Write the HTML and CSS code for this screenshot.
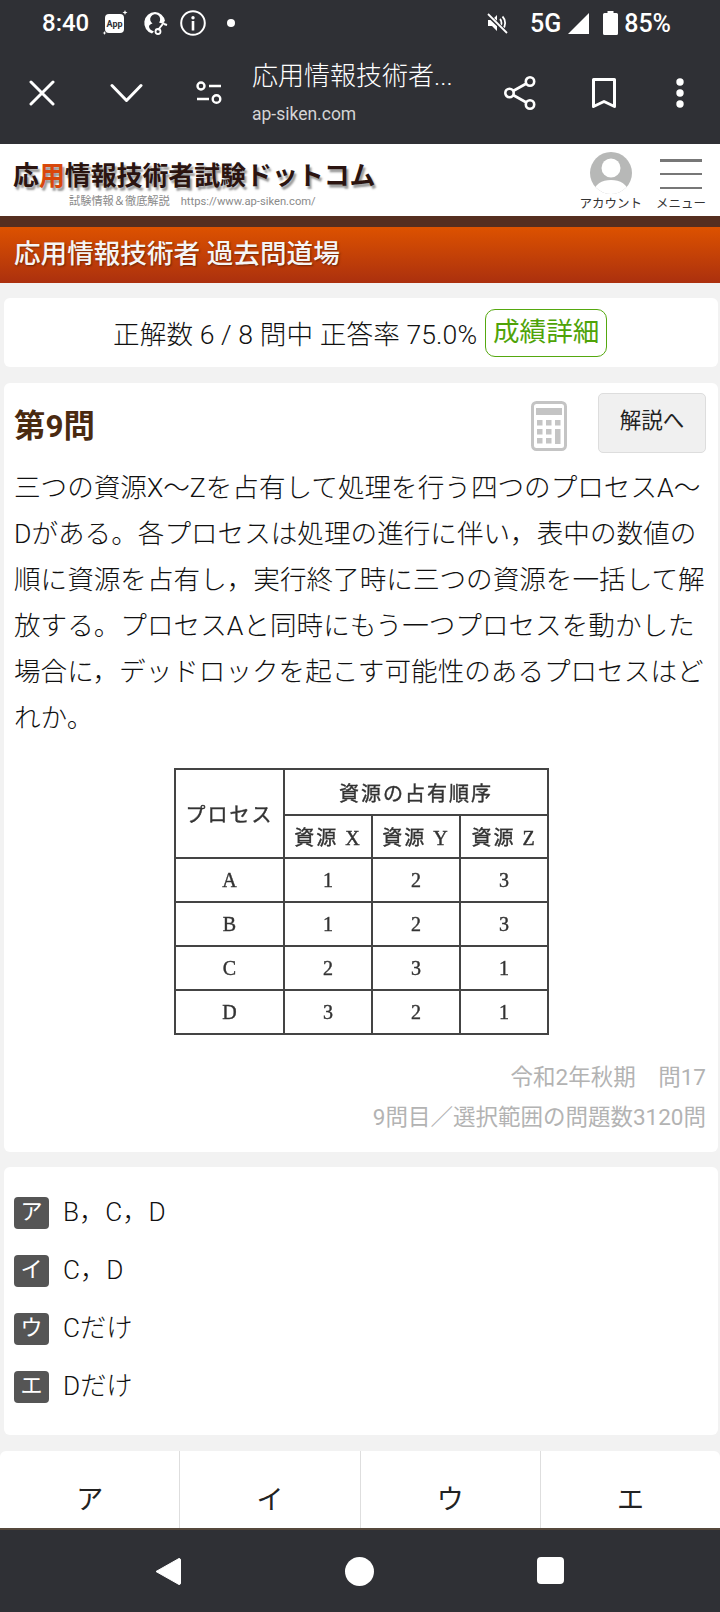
FILE: index.html
```html
<!DOCTYPE html>
<html lang="ja">
<head>
<meta charset="utf-8">
<title>応用情報技術者 過去問道場</title>
<link rel="stylesheet" href="styles.css">
</head>
<body>
<div class="phone">
  <div class="chrome">
    <div class="status">
      <span class="time">8:40</span>
      <svg class="st-app" width="26" height="26" viewBox="0 0 26 26"><rect x="3" y="4" width="19" height="19" rx="4" fill="#fff"/><text x="12.5" y="17" class="app-label">App</text><path d="M23 0l.7 1.8 1.8.7-1.8.7L23 5l-.7-1.8-1.8-.7 1.8-.7zM2.500 21l.6 1.400 1.400.6-1.400.6-.6 1.400-.6-1.400-1.400-.6 1.400-.6z" fill="#fff"/></svg>
      <svg class="st-person" width="26" height="26" viewBox="0 0 26 26"><path d="M12 2a11 11 0 0 0-3 21.500l2-2c-3-1-5-3-5-5 0-1.500 1.500-2.500 3.500-3a5 5 0 1 1 6.500-1c1 .2 2 .5 3 1l3-2.500A11 11 0 0 0 12 2z" fill="#fff"/><path d="M15 20l6-7.500" stroke="#fff" stroke-width="2" fill="none"/><circle cx="15" cy="21.500" r="2.500" stroke="#fff" stroke-width="1.800" fill="none"/><path d="M21 14l3 1" stroke="#fff" stroke-width="2"/></svg>
      <svg class="st-info" width="26" height="26" viewBox="0 0 26 26"><circle cx="13" cy="13" r="11.800" stroke="#fff" stroke-width="2" fill="none"/><circle cx="13" cy="7.800" r="1.700" fill="#fff"/><rect x="11.700" y="11" width="2.600" height="9.500" fill="#fff"/></svg>
      <span class="st-dot"></span>
      <span class="st-spacer"></span>
      <svg class="st-mute" width="22" height="22" viewBox="0 0 22 22"><path d="M2 8v6h4l5 5V3L6 8z" fill="#fff"/><path d="M14 7c2 2 2 6 0 8M16.500 4.500c3.500 3.500 3.500 9.500 0 13" stroke="#fff" stroke-width="1.800" fill="none"/><path d="M1 2l20 19" stroke="#2f3035" stroke-width="4"/><path d="M2 2l19 19" stroke="#fff" stroke-width="1.800"/></svg>
      <span class="net">5G</span>
      <svg class="st-signal" width="23" height="23" viewBox="0 0 23 23"><path d="M22 1v21H1z" fill="#fff"/></svg>
      <svg class="st-battery" width="15" height="24" viewBox="0 0 15 24"><path d="M4.500 0h6v2h3a1.500 1.500 0 0 1 1.500 1.500V22.500A1.500 1.500 0 0 1 13.500 24h-12A1.500 1.500 0 0 1 0 22.500V3.500A1.500 1.500 0 0 1 1.500 2h3z" fill="#fff"/></svg>
      <span class="batt">85%</span>
    </div>
    <div class="toolbar">
      <svg class="tb-close" width="26" height="26" viewBox="0 0 26 26"><path d="M2 2l22 22M24 2L2 24" stroke="#fff" stroke-width="3" stroke-linecap="round"/></svg>
      <svg class="tb-down" width="33" height="20" viewBox="0 0 33 20"><path d="M2 2.500l14.500 15 14.500-15" stroke="#fff" stroke-width="3" fill="none" stroke-linecap="round" stroke-linejoin="round"/></svg>
      <svg class="tb-tune" width="28" height="24" viewBox="0 0 28 24"><circle cx="6" cy="5" r="3.500" stroke="#fff" stroke-width="2.400" fill="none"/><path d="M14 5h12M2 18h12" stroke="#fff" stroke-width="2.600"/><circle cx="21.500" cy="18" r="3.800" stroke="#fff" stroke-width="2.400" fill="none"/></svg>
      <div class="tb-title">
        <div class="tb-main">応用情報技術者...</div>
        <div class="tb-sub">ap-siken.com</div>
      </div>
      <svg class="tb-share" width="34" height="36" viewBox="0 0 34 36"><path d="M6.500 18L27 6.500M6.500 18L27 29.500" stroke="#fff" stroke-width="2.600"/><circle cx="6.500" cy="18" r="4.200" fill="#2f3035" stroke="#fff" stroke-width="2.600"/><circle cx="27" cy="6.500" r="4.200" fill="#2f3035" stroke="#fff" stroke-width="2.600"/><circle cx="27" cy="29.500" r="4.200" fill="#2f3035" stroke="#fff" stroke-width="2.600"/></svg>
      <svg class="tb-mark" width="26" height="32" viewBox="0 0 26 32"><path d="M2.500 2.500h21v27L13 24.500 2.500 29.500z" stroke="#fff" stroke-width="3" fill="none" stroke-linejoin="round"/></svg>
      <svg class="tb-more" width="8" height="30" viewBox="0 0 8 30"><circle cx="4" cy="4" r="3.700" fill="#fff"/><circle cx="4" cy="15" r="3.700" fill="#fff"/><circle cx="4" cy="26" r="3.700" fill="#fff"/></svg>
    </div>
  </div>

  <header class="site">
    <div class="logo">
      <div class="logo-main">応<span class="logo-hi">用</span>情報技術者試験ドットコム</div>
      <div class="logo-sub"><span>試験情報＆徹底解説</span><span>https://www.ap-siken.com/</span></div>
    </div>
    <div class="hd-tools">
      <div class="hd-tool hd-acct">
        <svg width="42" height="42" viewBox="0 0 42 42"><defs><clipPath id="av"><circle cx="21" cy="21" r="21"/></clipPath></defs><circle cx="21" cy="21" r="21" fill="#b7b8b7"/><g clip-path="url(#av)"><circle cx="21" cy="16" r="9.500" fill="#fff"/><path d="M3 42c1-10 9-14 18-14s17 4 18 14z" fill="#fff"/></g></svg>
        <span>アカウント</span>
      </div>
      <div class="hd-tool hd-menu">
        <div class="burger"><i></i><i></i><i></i></div>
        <span>メニュー</span>
      </div>
    </div>
  </header>
  <div class="band"></div>
  <div class="title-bar">応用情報技術者 過去問道場</div>

  <main class="content">
    <section class="card score">
      <span class="score-text">正解数 6 / 8 問中 正答率 75.0%</span>
      <span class="score-btn">成績詳細</span>
    </section>

    <section class="card question">
      <div class="q-head">
        <h1 class="q-title">第9問</h1>
        <svg class="calc" width="36" height="50" viewBox="0 0 36 50"><rect x="1.500" y="1.500" width="33" height="47" rx="4" fill="#fff" stroke="#c4c4c4" stroke-width="3"/><rect x="5" y="7" width="26" height="7" fill="#c4c4c4"/><g fill="#c4c4c4"><rect x="6" y="19" width="5.500" height="5.500"/><rect x="15" y="19" width="5.500" height="5.500"/><rect x="24" y="19" width="5.500" height="5.500"/><rect x="6" y="28" width="5.500" height="5.500"/><rect x="15" y="28" width="5.500" height="5.500"/><rect x="24" y="28" width="5.500" height="15"/><rect x="6" y="37" width="5.500" height="5.500"/><rect x="15" y="37" width="5.500" height="5.500"/></g></svg>
        <span class="kaisetsu">解説へ</span>
      </div>
      <p class="q-text">三つの資源X〜Zを占有して処理を行う四つのプロセスA〜Dがある。各プロセスは処理の進行に伴い，表中の数値の順に資源を占有し，実行終了時に三つの資源を一括して解放する。プロセスAと同時にもう一つプロセスを動かした場合に，デッドロックを起こす可能性のあるプロセスはどれか。</p>
      <div class="fig-wrap">
        <table class="fig">
          <colgroup><col class="c-a"><col class="c-b"><col class="c-b"><col class="c-b"></colgroup>
          <tr class="r-1"><th rowspan="2">プロセス</th><th colspan="3">資源の占有順序</th></tr>
          <tr class="r-2"><th>資源 X</th><th>資源 Y</th><th>資源 Z</th></tr>
          <tr><td>A</td><td>1</td><td>2</td><td>3</td></tr>
          <tr><td>B</td><td>1</td><td>2</td><td>3</td></tr>
          <tr><td>C</td><td>2</td><td>3</td><td>1</td></tr>
          <tr><td>D</td><td>3</td><td>2</td><td>1</td></tr>
        </table>
      </div>
      <div class="q-meta">
        <div>令和2年秋期　問17</div>
        <div>9問目／選択範囲の問題数3120問</div>
      </div>
    </section>

    <section class="card answers">
      <div class="ans"><span class="badge">ア</span><span class="ans-text">B，C，D</span></div>
      <div class="ans"><span class="badge">イ</span><span class="ans-text">C，D</span></div>
      <div class="ans"><span class="badge">ウ</span><span class="ans-text">Cだけ</span></div>
      <div class="ans"><span class="badge">エ</span><span class="ans-text">Dだけ</span></div>
    </section>

    <section class="choices">
      <div class="choice">ア</div>
      <div class="choice">イ</div>
      <div class="choice">ウ</div>
      <div class="choice">エ</div>
    </section>
  </main>

  <nav class="navbar">
    <svg width="28" height="29" viewBox="0 0 28 29"><path d="M2 14.500L25 1.500a1.500 1.500 0 0 1 1.500 1.500v23a1.500 1.500 0 0 1-1.500 1.500z" fill="#fff" stroke="#fff" stroke-width="1" stroke-linejoin="round"/></svg>
    <svg width="29" height="29" viewBox="0 0 29 29"><circle cx="14.500" cy="14.500" r="14.500" fill="#fff"/></svg>
    <svg width="27" height="27" viewBox="0 0 27 27"><rect width="27" height="27" rx="4" fill="#fff"/></svg>
  </nav>
</div>
</body>
</html>
```
FILE: styles.css
```css
* { box-sizing: border-box; }
html, body { margin: 0; padding: 0; }
body {
  width: 720px;
  height: 1612px;
  overflow: hidden;
  background: #f2f2f2;
  font-family: Roboto, "Noto Sans CJK JP", sans-serif;
  color: #222;
}
.phone { width: 720px; height: 1612px; display: flex; flex-direction: column; overflow: hidden; }

/* Android chrome */
.chrome { height: 144px; background: #2f3035; color: #fff; flex: none; }
.status { height: 46px; display: flex; align-items: center; padding: 0 49px 0 42px; }
.time { font-size: 24px; font-weight: 500; width: 60px; }
.app-label { font: 700 9px Roboto, sans-serif; text-anchor: middle; fill: #2f3035; }
.st-person { margin-left: 15px; }
.st-info { margin-left: 11px; }
.st-dot { width: 8px; height: 8px; border-radius: 50%; background: #fff; margin-left: 21px; }
.st-spacer { flex: 1; }
.net { font-size: 25px; margin-left: 22px; font-weight: 500; }
.st-signal { margin-left: 6px; }
.st-battery { margin-left: 13px; }
.batt { font-size: 25px; font-weight: 500; margin-left: 6px; }

.toolbar { height: 94px; display: flex; align-items: center; }
.tb-close { margin-left: 29px; flex: none; }
.tb-down { margin-left: 55px; flex: none; }
.tb-tune { margin-left: 52px; flex: none; }
.tb-title { margin-left: 29px; width: 250px; flex: none; padding-top: 1px; }
.tb-main { font-size: 26px; line-height: 38px; white-space: nowrap; margin-top: -4px; font-weight: 300; }
.tb-sub { font-size: 17.500px; line-height: 24px; color: #d4d4d6; margin-top: 7px; }
.tb-share { margin-left: 1px; flex: none; }
.tb-mark { margin-left: 54px; flex: none; }
.tb-more { margin-left: 59px; flex: none; }

/* Site header */
.site { height: 72px; background: #fff; display: flex; justify-content: space-between; flex: none; }
.logo { padding: 14px 0 0 13px; }
.logo-main {
  font-size: 25.900px; line-height: 37px; font-weight: 700; color: #2b1410; white-space: nowrap;
  text-shadow: 2px 3px 2px #9a9a9a;
}
.logo-hi { color: #d8480c; }
.logo-sub { font-size: 11.200px; line-height: 14px; color: #8a8a8a; margin: 0 0 0 56px; display: flex; gap: 11px; white-space: nowrap; }
.hd-tools { display: flex; padding: 8px 14px 0 0; gap: 14px; }
.hd-tool { display: flex; flex-direction: column; align-items: center; }
.hd-tool span { font-size: 12.500px; line-height: 20px; color: #333; white-space: nowrap; }
.hd-acct svg { display: block; }
.burger { width: 42px; height: 42px; padding: 7px 0 5px; display: flex; flex-direction: column; justify-content: space-between; }
.burger i { display: block; height: 2.500px; background: #777; }

.band { height: 11px; background: #552e20; flex: none; }
.title-bar {
  height: 56px; flex: none; background: linear-gradient(#dd5200, #ab300e);
  color: #f5f5f5; font-size: 26.600px; font-weight: 500; line-height: 54px; padding-left: 14px;
  text-shadow: 1px 1px 2px rgba(60, 20, 0, .6);
}

/* Content */
.content { flex: 1; padding: 15px 2px 0 4px; min-height: 0; overflow: hidden; }
.card { background: #fff; border-radius: 6px; }
.score { height: 69px; display: flex; align-items: center; padding-left: 109px; gap: 8px; }
.score-text { font-size: 26.600px; font-weight: 300; letter-spacing: .1px; color: #111; white-space: nowrap; }
.score-btn {
  width: 122px; height: 48px; border: 1px solid #55a80f; border-radius: 10px; color: #4fa308;
  font-size: 26.600px; font-weight: 400; line-height: 44px; text-align: center; white-space: nowrap;
}

.question { height: 769px; margin-top: 16px; padding: 10px 12px 0 10px; }
.q-head { height: 60px; display: flex; align-items: center; }
.q-title { margin: 0; font-size: 31.400px; font-weight: 700; color: #4a2a10; flex: 1; }
.calc { margin-right: 31px; margin-top: 5px; }
.kaisetsu {
  width: 108px; height: 60px; background: #f0f0f0; border: 1px solid #ddd; border-radius: 5px;
  font-size: 21.500px; font-weight: 400; line-height: 54px; text-align: center; color: #222;
}
.q-text { margin: 12px -8px 0 0; font-size: 26.600px; font-weight: 300; line-height: 46px; color: #111; }

.fig-wrap { margin-top: 27px; padding-left: 160px; }
.fig {
  border-collapse: collapse; table-layout: fixed; width: 373px; height: 264px; background: #fff;
  font-family: "Liberation Serif", "Noto Sans CJK JP", serif; font-size: 20px; color: #333;
  border: 2px solid #444; filter: blur(.6px);
}
.fig .c-a { width: 109px; }
.fig .c-b { width: 88px; }
.fig th, .fig td { border: 2px solid #444; padding: 0; text-align: center; font-weight: 400; -webkit-text-stroke: .4px #333; }
.fig th { letter-spacing: 2px; }
.fig tr.r-1 { height: 46px; }
.fig tr.r-2 { height: 43px; }
.fig td { height: 44px; }

.q-meta { margin-top: 22px; text-align: right; color: #b3b3b3; font-size: 22.500px; font-weight: 400; line-height: 40px; }

.answers { height: 268px; margin-top: 15px; padding: 30px 0 0 10px; }
.ans { display: flex; align-items: center; height: 32px; margin-bottom: 26px; font-size: 26.200px; font-weight: 300; color: #111; }
.ans-text { margin-top: -6px; }
.badge {
  width: 35px; height: 32px; margin-right: 14px; background: #555; color: #fff; border-radius: 4px;
  font-size: 22px; font-weight: 400; line-height: 30px; text-align: center;
}

.choices { display: flex; height: 78px; margin: 16px -2px 0 -4px; background: #fff; border-radius: 6px 6px 0 0; }
.choice { flex: 1; border-left: 1px solid #dedede; font-size: 27px; font-weight: 400; text-align: center; padding-top: 29px; line-height: 40px; }
.choice:first-child { border-left: 0; }

.navbar {
  height: 84px; flex: none; background: #2f3035; border-top: 2px solid #55483c;
  display: flex; align-items: flex-start; padding: 27px 156px 0 154px; justify-content: space-between;
}
```
